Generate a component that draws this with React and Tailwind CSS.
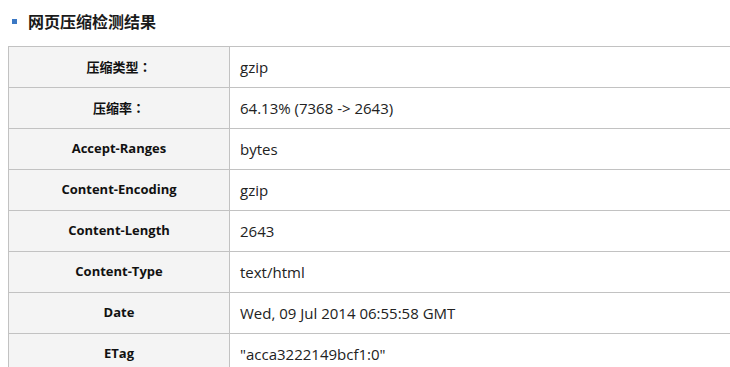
const colon = <span style={{ fontFamily: '"Noto Sans CJK JP", sans-serif' }}>：</span>;

const rows = [
  ['压缩类型', 'gzip', true],
  ['压缩率', '64.13% (7368 -> 2643)', true],
  ['Accept-Ranges', 'bytes'],
  ['Content-Encoding', 'gzip'],
  ['Content-Length', '2643'],
  ['Content-Type', 'text/html'],
  ['Date', 'Wed, 09 Jul 2014 06:55:58 GMT'],
  ['ETag', '"acca3222149bcf1:0"'],
];

export default function App() {
  return (
    <div
      className="w-[730px] h-[367px] overflow-hidden bg-white text-[#222]"
      style={{ fontFamily: '"Open Sans", "Noto Sans CJK SC", sans-serif' }}
    >
      {/* Title */}
      <div className="flex items-center pl-[12px] h-[42px] pt-[1px]">
        <span className="w-[5px] h-[5px] bg-[#3b78c4] mr-[11px]" />
        <h2 className="text-[16px] font-bold text-[#1a1a1a] leading-none">网页压缩检测结果</h2>
      </div>

      {/* Result table */}
      <div className="pl-[8px] pt-[4px]">
        <table className="w-[760px] border-collapse">
          <tbody>
            {rows.map(([k, v, cn]) => (
              <tr key={k} className="h-[41px]">
                <td className="w-[221px] border border-[#c2c2c2] bg-[#f4f4f4] text-center text-[13px] font-bold text-[#111]">
                  {k}
                  {cn && colon}
                </td>
                <td className="border border-[#c2c2c2] pl-[10px] text-[15px] text-[#222]">
                  {v}
                </td>
              </tr>
            ))}
          </tbody>
        </table>
      </div>
    </div>
  );
}
